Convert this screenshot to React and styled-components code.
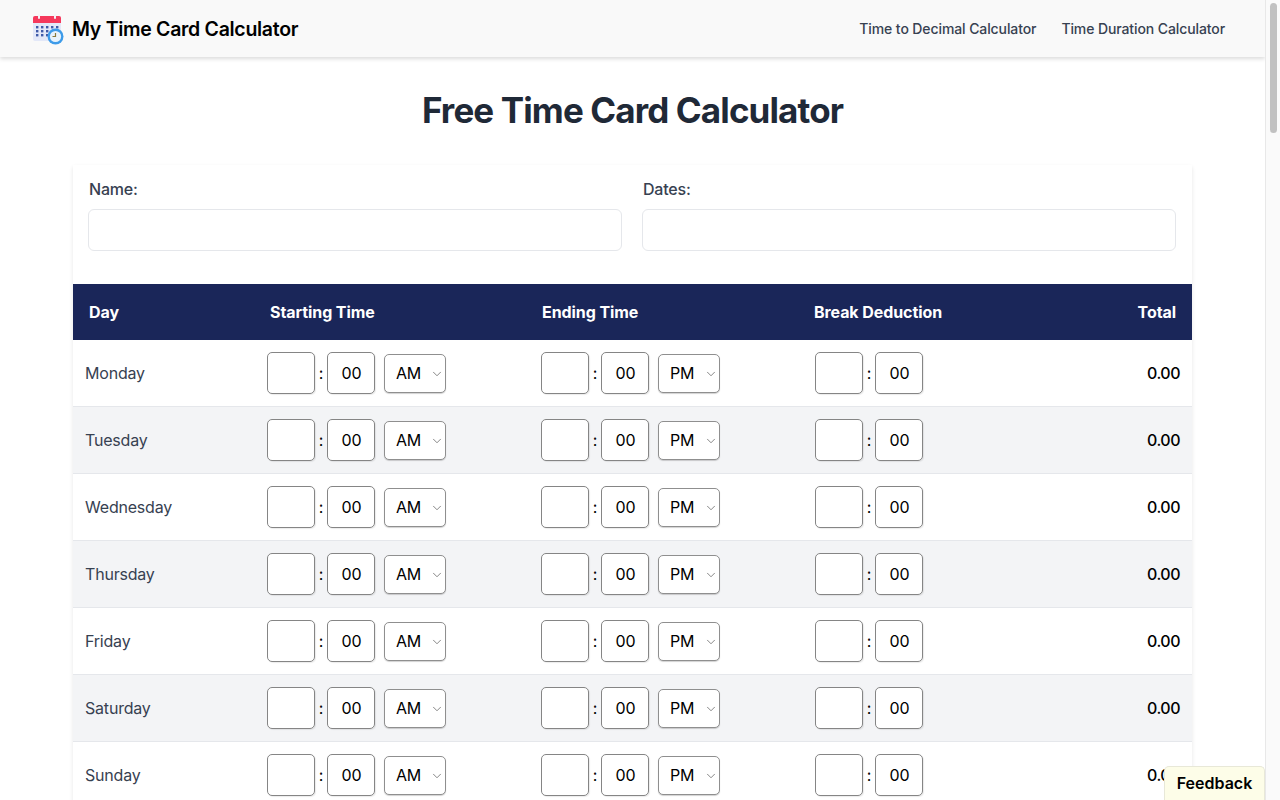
import styled, { createGlobalStyle } from 'styled-components';
import { ChevronDown } from 'lucide-react';

const days = ['Monday', 'Tuesday', 'Wednesday', 'Thursday', 'Friday', 'Saturday', 'Sunday'];

const GlobalStyle = createGlobalStyle`
  html, body {
    margin: 0;
    height: 100%;
    overflow: hidden;
    background: #fff;
  }
  * {
    box-sizing: border-box;
  }
  body {
    font-family: Inter, "Liberation Sans", sans-serif;
    color: #374151;
  }
`;

const Logo = () => (
  <svg width="32" height="32" viewBox="0 0 32 32">
    <rect x="1" y="3" width="28" height="25" rx="2" fill="#e3e8f8" />
    <path d="M1 10V5a2 2 0 0 1 2-2h24a2 2 0 0 1 2 2v5z" fill="#f5395c" />
    <rect x="6" y="1" width="2" height="5" rx="1" fill="#f3f4f8" />
    <rect x="22" y="1" width="2" height="5" rx="1" fill="#f3f4f8" />
    {[0, 1, 2].map((r) =>
      [0, 1, 2, 3, 4].map((c) => (
        <rect key={`${r}-${c}`} x={4 + c * 5} y={13 + r * 4} width="2.4" height="2.4" fill={r === 2 && c > 2 ? '#e3e8f8' : '#3f5aa8'} />
      )),
    )}
    <circle cx="23.5" cy="23.5" r="8" fill="#3d9be9" />
    <circle cx="23.5" cy="23.5" r="5.6" fill="#e8f3fc" />
    <path d="M23.5 20v3.5h-3" stroke="#8a7a3c" strokeWidth="1.2" fill="none" />
  </svg>
);

const TimeControls = ({ meridiem }) => (
  <Controls>
    <TimeInput defaultValue="" />
    <Colon>:</Colon>
    <TimeInput defaultValue="00" />
    {meridiem && (
      <SelectWrap>
        <Select defaultValue={meridiem}>
          <option>AM</option>
          <option>PM</option>
        </Select>
        <Chevron size={14} strokeWidth={1.2} />
      </SelectWrap>
    )}
  </Controls>
);

const App = () => {
  return (
    <Shell>
      <GlobalStyle />
      <Content>
        <Navbar>
          <Brand>
            <Logo />
            My Time Card Calculator
          </Brand>
          <NavLinks>
            <NavLink href="#">Time to Decimal Calculator</NavLink>
            <NavLink href="#">Time Duration Calculator</NavLink>
          </NavLinks>
        </Navbar>
        <Main>
          <Title>Free Time Card Calculator</Title>
          <Card>
            <Fields>
              <Field>
                <FieldLabel>Name:</FieldLabel>
                <TextInput />
              </Field>
              <Field>
                <FieldLabel>Dates:</FieldLabel>
                <TextInput />
              </Field>
            </Fields>
            <Table>
              <colgroup>
                <col width="181" />
                <col width="272" />
                <col width="272" />
                <col width="272" />
                <col width="122" />
              </colgroup>
              <thead>
                <tr>
                  <Th>Day</Th>
                  <Th>Starting Time</Th>
                  <Th>Ending Time</Th>
                  <Th>Break Deduction</Th>
                  <Th $right>Total</Th>
                </tr>
              </thead>
              <tbody>
                {days.map((day) => (
                  <Row key={day}>
                    <DayCell>{day}</DayCell>
                    <TimeCell $inset={13}>
                      <TimeControls meridiem="AM" />
                    </TimeCell>
                    <TimeCell $inset={15}>
                      <TimeControls meridiem="PM" />
                    </TimeCell>
                    <TimeCell $inset={17}>
                      <TimeControls />
                    </TimeCell>
                    <TotalCell>0.00</TotalCell>
                  </Row>
                ))}
              </tbody>
            </Table>
          </Card>
        </Main>
        <Feedback>Feedback</Feedback>
      </Content>
      <ScrollRail>
        <ScrollThumb />
      </ScrollRail>
    </Shell>
  );
};

const Shell = styled.div`
  display: flex;
  height: 100vh;
  overflow: hidden;
`;

const Content = styled.div`
  position: relative;
  flex: 1;
  min-width: 0;
  overflow: hidden;
`;

const ScrollRail = styled.div`
  width: 15px;
  padding: 3px 3px 0 4px;
  background: #fafafa;
  border-left: 1px solid #e8e8e8;
`;

const ScrollThumb = styled.div`
  height: 130px;
  border-radius: 4px;
  background: #c1c1c1;
`;

const Navbar = styled.nav`
  height: 57px;
  padding: 0 40px 0 32px;
  display: flex;
  align-items: center;
  justify-content: space-between;
  background: #f9f9f9;
  box-shadow: 0 2px 4px rgba(0, 0, 0, 0.14);
`;

const Brand = styled.div`
  display: flex;
  align-items: center;
  gap: 8px;
  font-size: 19.5px;
  font-weight: 600;
  letter-spacing: -0.3px;
  color: #000;
`;

const NavLinks = styled.div`
  display: flex;
  gap: 25px;
`;

const NavLink = styled.a`
  font-size: 14px;
  font-weight: 500;
  letter-spacing: -0.1px;
  color: #374151;
  text-decoration: none;
`;

const Main = styled.main`
  padding: 0 73px;
`;

const Title = styled.h1`
  margin: 0;
  padding: 29px 0 31px;
  font-size: 35px;
  line-height: 48px;
  font-weight: 700;
  letter-spacing: -0.88px;
  text-align: center;
  color: #1f2937;
`;

const Card = styled.div`
  background: #fff;
  box-shadow: 0 2px 4px rgba(0, 0, 0, 0.1);
`;

const Fields = styled.div`
  display: grid;
  grid-template-columns: 1fr 1fr;
  gap: 20px;
  padding: 14px 16px 33px 15px;
`;

const Field = styled.label`
  display: flex;
  flex-direction: column;
  gap: 10px;
`;

const FieldLabel = styled.span`
  padding-left: 1px;
  font-size: 16px;
  line-height: 20px;
  font-weight: 500;
  letter-spacing: -0.2px;
  color: #374151;
`;

const TextInput = styled.input`
  height: 42px;
  width: 100%;
  border: 1px solid #e5e7eb;
  border-radius: 6px;
  background: #fff;
`;

const Table = styled.table`
  width: 100%;
  table-layout: fixed;
  border-collapse: separate;
  border-spacing: 0;
`;

const Th = styled.th`
  height: 56px;
  padding: 0 16px;
  background: #1a2659;
  color: #fff;
  font-size: 16px;
  font-weight: 700;
  letter-spacing: -0.08px;
  text-align: ${(p) => (p.$right ? 'right' : 'left')};
`;

const Row = styled.tr`
  height: 67px;
  & > td {
    border-bottom: 1px solid #e5e7eb;
  }
  &:nth-child(even) {
    background: #f3f4f6;
  }
`;

const DayCell = styled.td`
  padding: 0 12px;
  font-size: 16px;
  letter-spacing: -0.2px;
  color: #374151;
`;

const TimeCell = styled.td`
  padding: 0 0 0 ${(p) => p.$inset}px;
`;

const TotalCell = styled.td`
  padding: 0 12px;
  font-size: 16px;
  font-weight: 500;
  letter-spacing: -0.5px;
  color: #000;
  text-align: right;
`;

const Controls = styled.div`
  display: flex;
  align-items: center;
`;

const TimeInput = styled.input`
  width: 48px;
  height: 42px;
  padding: 0 0 0 1px;
  border: 1px solid #858585;
  border-radius: 5px;
  background: #fff;
  box-shadow: 1px 1px 1px rgba(0, 0, 0, 0.08);
  font-family: inherit;
  font-size: 16px;
  color: #000;
  text-align: center;
`;

const Colon = styled.span`
  width: 12px;
  text-align: center;
  font-size: 16px;
  color: #000;
`;

const SelectWrap = styled.div`
  position: relative;
  margin-left: 9px;
  width: 62px;
  height: 39px;
`;

const Select = styled.select`
  appearance: none;
  width: 100%;
  height: 100%;
  padding: 0 0 0 11px;
  border: 1px solid #8f8f8f;
  border-radius: 5px;
  background: #fff;
  box-shadow: 0 1px 1px rgba(0, 0, 0, 0.18);
  font-family: inherit;
  font-size: 16px;
  letter-spacing: -0.3px;
  color: #000;
`;

const Chevron = styled(ChevronDown)`
  position: absolute;
  top: 13px;
  right: 2px;
  color: #555;
  pointer-events: none;
`;

const Feedback = styled.button`
  position: absolute;
  right: 0;
  bottom: 0;
  width: 101px;
  height: 34px;
  padding: 0 0 2px;
  border: 1px solid #e8e8d8;
  border-bottom: 0;
  border-radius: 5px 5px 0 0;
  background: #fdfde8;
  font-family: inherit;
  font-size: 16px;
  font-weight: 600;
  color: #000;
`;

export default App;
